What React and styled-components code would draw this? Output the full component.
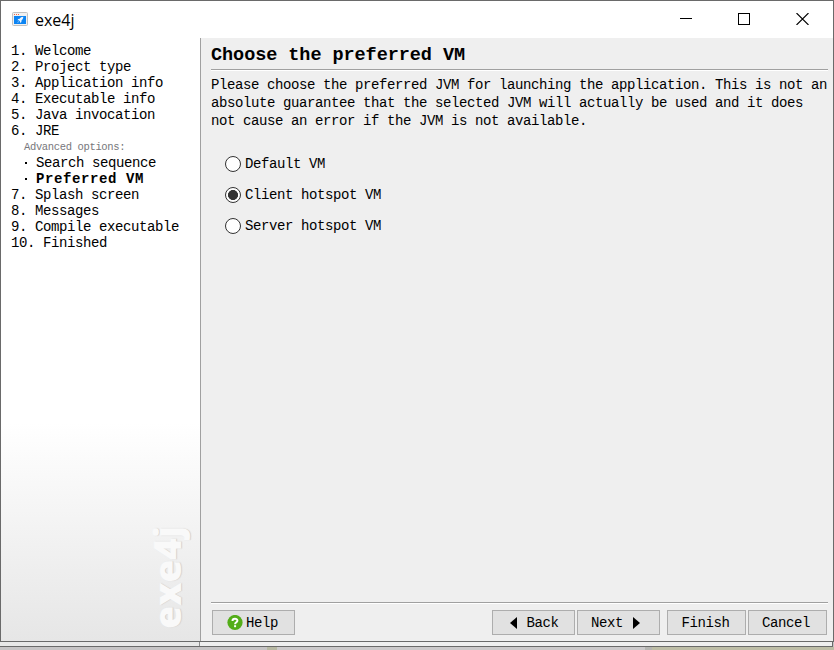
import React from 'react';
import styled, { createGlobalStyle, css } from 'styled-components';

const GlobalStyle = createGlobalStyle`
  *, *::before, *::after { box-sizing: border-box; }
  html, body { margin: 0; padding: 0; overflow: hidden; }
  body { background: #c6c4c5; }
`;

const uiText = css`
  font-family: 'Liberation Mono', 'Courier New', monospace;
  font-size: 14px;
  letter-spacing: -0.4px;
  color: #000;
  white-space: pre;
`;

const Desktop = styled.div`
  width: 834px;
  height: 650px;
  display: flex;
  flex-direction: column;
`;

const Window = styled.div`
  height: 642px;
  border: 1px solid #6a6a6a;
  display: flex;
  flex-direction: column;
  background: #efefef;
`;

const TitleBar = styled.header`
  height: 37px;
  flex: none;
  display: flex;
  align-items: center;
  padding-left: 11px;
  background: #fff;
`;

const AppTitle = styled.span`
  flex: 1;
  margin: 0 0 0 7px;
  font: 16px/22px 'Open Sans', 'Noto Sans', sans-serif;
  letter-spacing: 0;
  color: #000;
`;

const Controls = styled.div`
  display: flex;
  gap: 46px;
  padding: 0 24px 1px 0;
  svg { display: block; }
`;

const Content = styled.div`
  flex: 1;
  display: flex;
  min-height: 0;
`;

const Sidebar = styled.nav`
  width: 200px;
  flex: none;
  display: flex;
  flex-direction: column;
  justify-content: space-between;
  border-right: 1px solid #a0a0a0;
  background: linear-gradient(#fff 0, #fff 385px, #e6e6e6 100%);
`;

const Steps = styled.div`
  padding: 5px 0 0 10px;
`;

const Step = styled.div`
  ${uiText}
  line-height: 16px;
  height: 16px;
  display: flex;
  align-items: center;
`;

const SubStep = styled(Step)`
  padding-left: 14px;
  gap: 9px;
  ${(p) => p.$current && css`
    font-weight: 700;
    letter-spacing: 0.6px;
  `}
  &::before {
    content: '';
    width: 2px;
    height: 2px;
    background: #000;
  }
`;

const StepGroup = styled(Step)`
  padding-left: 13px;
  font-size: 10.5px;
  letter-spacing: -0.35px;
  color: #77777c;
`;

const Brand = styled.div`
  align-self: flex-end;
  margin: 0 15px 12px 0;
  writing-mode: vertical-rl;
  transform: rotate(180deg);
  font: 800 37px/36px 'Open Sans', 'Noto Sans', sans-serif;
  letter-spacing: 0;
  color: #f9f9f9;
  text-shadow: 0 1px 1px #cfcfcf;
`;

const Main = styled.main`
  flex: 1;
  display: flex;
  flex-direction: column;
  padding: 0 5px 6px 10px;
`;

const Heading = styled.h1`
  ${uiText}
  margin: 0;
  height: 31px;
  padding-top: 6px;
  font-size: 18.5px;
  letter-spacing: -0.06px;
  line-height: 24px;
`;

const Rule = styled.div`
  height: 2px;
  flex: none;
  background: #a0a0a0;
  border-bottom: 1px solid #fff;
`;

const Description = styled.p`
  ${uiText}
  margin: 5px 0 0;
  line-height: 18px;
`;

const Options = styled.div`
  flex: 1;
  display: flex;
  flex-direction: column;
  gap: 15px;
  padding: 26px 0 0 14px;
`;

const Option = styled.label`
  ${uiText}
  display: flex;
  align-items: center;
  gap: 4px;
  height: 16px;
  line-height: 16px;
`;

const Radio = styled.span`
  width: 16px;
  height: 16px;
  border: 1px solid #333;
  border-radius: 50%;
  background: ${(p) => (p.$on ? 'radial-gradient(circle, #333 4.7px, #fff 5.3px)' : '#fff')};
`;

const Footer = styled.footer`
  display: flex;
  gap: 2px;
  padding: 6px 1px 0;
`;

const Button = styled.button`
  ${uiText}
  width: ${(p) => p.$width}px;
  height: 25px;
  padding: ${(p) => p.$padding || '0 2px 0 0'};
  display: flex;
  align-items: center;
  justify-content: center;
  gap: ${(p) => p.$gap || 0}px;
  border: 1px solid #adadad;
  background: #e1e1e1;
  line-height: 16px;
  margin-left: ${(p) => p.$push || 0};
`;

const LowerWindow = styled.div`
  width: 833px;
  height: 5px;
  display: flex;
  border: solid #6a6a6a;
  border-width: 0 1px 1px 0;
  background: #efefef;
`;

const LowerPane = styled.div`
  width: 200px;
  border-right: 1px solid #8c8c8c;
  background: #e8e8e8;
`;

const Backdrop = styled.div`
  height: 3px;
  background: linear-gradient(
    90deg,
    #c6c4c5 0 267px,
    #b7b8a2 267px 277px,
    #cbc9ca 277px 645px,
    #b5b5b1 645px 652px,
    #bdbda6 652px 834px
  );
`;

const AppIcon = () => (
  <svg width="16" height="15" viewBox="0 0 16 15">
    <rect x="0.500" y="0.500" width="15" height="13" rx="1" fill="#f0f0f0" stroke="#c0c0c0" />
    <path d="M2 2.500h1M4 2.500h1M6 2.500h1" stroke="#f0674a" />
    <path d="M2 4h12v8H2z" fill="#0b84f3" />
    <path d="M11.300 4.800C9.500 4.900 8.400 5.700 7.700 6.700L6.300 6.900L5.400 8.200L6.900 8.300L8 9.400L8.100 10.900L9.400 9.900L9.500 8.500C10.500 7.700 11.200 6.600 11.300 4.800ZM6.200 9.300L6.900 10L5.300 10.800Z" fill="#eaf4ff" />
  </svg>
);

const MinimizeIcon = () => (
  <svg width="12" height="12" shapeRendering="crispEdges">
    <path d="M0 5.500h12" stroke="#000" />
  </svg>
);

const MaximizeIcon = () => (
  <svg width="12" height="12" shapeRendering="crispEdges">
    <rect x="0.500" y="0.500" width="11" height="11" fill="none" stroke="#000" />
  </svg>
);

const CloseIcon = () => (
  <svg width="13" height="12">
    <path d="M.5 0l12 12M12.500 0l-12 12" stroke="#000" strokeWidth="1.100" />
  </svg>
);

const HelpIcon = () => (
  <svg width="16" height="16">
    <circle cx="8" cy="7.500" r="7.600" fill="#53ad18" />
    <path d="M5.500 5.900C5.500 2.900 10.500 3 10.400 5.800C10.300 7.300 8.100 7.300 8.100 9.200" fill="none" stroke="#fff" strokeWidth="2" />
    <path d="M7.100 10.200h2v2h-2z" fill="#fff" />
  </svg>
);

const Arrow = ({ right }) => (
  <svg width="7" height="12">
    <path d={right ? 'M0 0v12L7 6z' : 'M7 0v12L0 6z'} fill="#000" />
  </svg>
);

const firstSteps = [
  '1. Welcome',
  '2. Project type',
  '3. Application info',
  '4. Executable info',
  '5. Java invocation',
  '6. JRE',
];
const lastSteps = ['7. Splash screen', '8. Messages', '9. Compile executable', '10. Finished'];
const options = ['Default VM', 'Client hotspot VM', 'Server hotspot VM'];

export default function App() {
  return (
    <Desktop>
      <GlobalStyle />
      <Window>
        <TitleBar>
          <AppIcon />
          <AppTitle>exe4j</AppTitle>
          <Controls>
            <MinimizeIcon />
            <MaximizeIcon />
            <CloseIcon />
          </Controls>
        </TitleBar>
        <Content>
          <Sidebar>
            <Steps>
              {firstSteps.map((s) => <Step key={s}>{s}</Step>)}
              <StepGroup>Advanced options:</StepGroup>
              <SubStep>Search sequence</SubStep>
              <SubStep $current>Preferred VM</SubStep>
              {lastSteps.map((s) => <Step key={s}>{s}</Step>)}
            </Steps>
            <Brand>exe4j</Brand>
          </Sidebar>
          <Main>
            <Heading>Choose the preferred VM</Heading>
            <Rule />
            <Description>
              {'Please choose the preferred JVM for launching the application. This is not an\nabsolute guarantee that the selected JVM will actually be used and it does\nnot cause an error if the JVM is not available.'}
            </Description>
            <Options>
              {options.map((o) => (
                <Option key={o}>
                  <Radio $on={o === 'Client hotspot VM'} />
                  {o}
                </Option>
              ))}
            </Options>
            <Rule />
            <Footer>
              <Button $width={83} $gap={3}><HelpIcon />Help</Button>
              <Button $width={83} $gap={9} $padding="0 0 0 2px" $push="auto"><Arrow />Back</Button>
              <Button $width={83} $gap={10} $padding="0 6px 0 0">Next<Arrow right /></Button>
              <Button $width={79} $push="5px">Finish</Button>
              <Button $width={79} $padding="0 3px 0 0">Cancel</Button>
            </Footer>
          </Main>
        </Content>
      </Window>
      <LowerWindow>
        <LowerPane />
      </LowerWindow>
      <Backdrop />
    </Desktop>
  );
}
